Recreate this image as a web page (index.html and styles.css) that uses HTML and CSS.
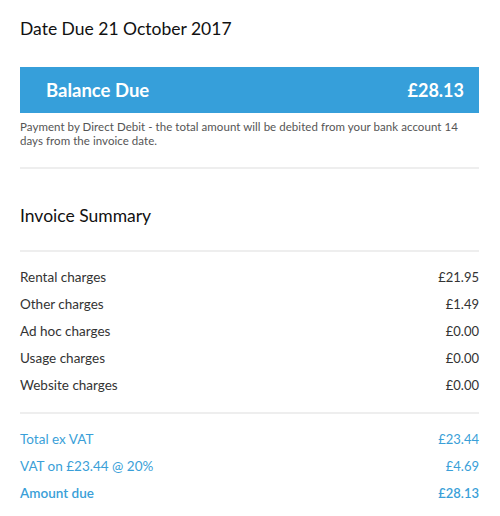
FILE: index.html
```html
<!DOCTYPE html>
<html>
<head>
<meta charset="utf-8">
<link rel="stylesheet" href="styles.css">
</head>
<body>
<div class="page">
  <h1 class="date-due">Date Due 21 October 2017</h1>
  <div class="balance">
    <span class="balance-label">Balance Due</span>
    <span class="balance-amount">£28.13</span>
  </div>
  <p class="note">Payment by Direct Debit - the total amount will be debited from your bank account 14 days from the invoice date.</p>
  <hr class="sep sep-first">
  <h2 class="summary-title">Invoice Summary</h2>
  <hr class="sep">
  <div class="rows">
    <div class="row"><span>Rental charges</span><span>£21.95</span></div>
    <div class="row"><span>Other charges</span><span>£1.49</span></div>
    <div class="row"><span>Ad hoc charges</span><span>£0.00</span></div>
    <div class="row"><span>Usage charges</span><span>£0.00</span></div>
    <div class="row"><span>Website charges</span><span>£0.00</span></div>
  </div>
  <hr class="sep">
  <div class="rows totals">
    <div class="row"><span>Total ex VAT</span><span>£23.44</span></div>
    <div class="row"><span>VAT on £23.44 @ 20%</span><span>£4.69</span></div>
    <div class="row strong"><span>Amount due</span><span>£28.13</span></div>
  </div>
</div>
</body>
</html>
```
FILE: styles.css
```css
* { box-sizing: border-box; }
html, body { margin: 0; padding: 0; background: #fff; }
body { font-family: "Lato", "Open Sans", sans-serif; color: #222; }
.page { padding: 17px 21px 0 20px; }
.date-due { margin: 0; font-size: 17.5px; font-weight: 400; line-height: 24px; color: #111; }
.balance {
  margin-top: 26px;
  height: 46px;
  background: #369fda;
  display: flex;
  align-items: center;
  justify-content: space-between;
  padding: 0 15px 0 26px;
  color: #fff;
  font-weight: 700;
  font-size: 18.5px;
}
.balance-amount { font-size: 18px; }
.note { margin: 7px 0 0; font-size: 11.5px; line-height: 14px; color: #555; letter-spacing: 0.05px; }
.sep { border: 0; height: 2px; background: #eeeeee; margin: 0; }
.sep-first { margin-top: 19px; }
.summary-title { margin: 35px 0 0; font-size: 17.5px; font-weight: 400; line-height: 24px; color: #111; }
.summary-title + .sep { margin-top: 22px; }
.rows { padding: 12px 0 13px; display: flex; flex-direction: column; }
.row { display: flex; justify-content: space-between; font-size: 13.5px; line-height: 27px; color: #333; }
.row span:last-child { font-size: 13px; }
.totals { padding-top: 12px; }
.totals .row { color: #3a9fd8; }
.totals .strong { font-weight: 600; }
```
